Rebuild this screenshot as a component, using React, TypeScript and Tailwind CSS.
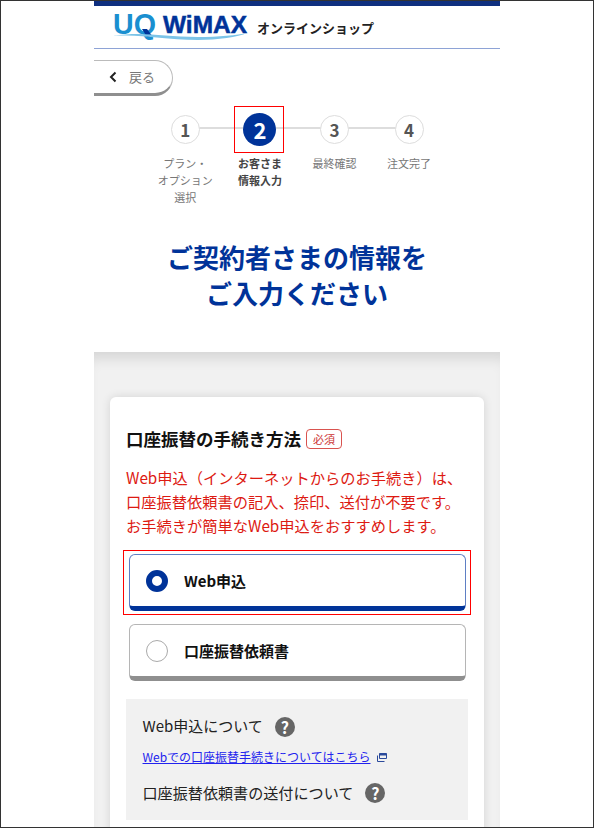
const FONT = "font-['Noto_Sans_CJK_JP','Noto_Sans',sans-serif]";

function Logo() {
  return (
    <svg width="136" height="36" viewBox="0 -4 136 36" className="shrink-0">
      <text x="0" y="22" fontFamily="'Liberation Sans',sans-serif" fontWeight="700" fontSize="30" fill="#1a8fd0" textLength="43" lengthAdjust="spacingAndGlyphs">UQ</text>
      <path d="M29 17h5l6 8h-6z" fill="#003399" />
      <text x="50" y="21" fontFamily="'Liberation Sans',sans-serif" fontWeight="700" fontSize="24" fill="#003399" stroke="#003399" strokeWidth="0.5" textLength="84" lengthAdjust="spacingAndGlyphs">WiMAX</text>
      <path d="M0 24C30 19 50 25 85 25 105 25 125 23 134 21 125 25 105 28 85 28 50 28 30 22 0 24z" fill="#7cc4e8" />
    </svg>
  );
}

function Step({ n, label, active }: { n: number; label: string[]; active?: boolean }) {
  return (
    <div className="relative flex w-[74.6px] flex-col items-center">
      <div
        className={
          active
            ? "flex h-[33px] w-[33px] items-center justify-center rounded-full bg-[#003399] text-[22px] font-bold text-white"
            : "flex h-[29px] w-[29px] items-center justify-center rounded-full border border-[#ddd] bg-white text-[17px] font-bold text-[#555]"
        }
      >
        {n}
      </div>
      <div
        className={
          "absolute whitespace-nowrap text-center text-[11px] leading-[17px] " +
          (active ? "top-[42px] font-bold text-[#444]" : "top-[40px] text-[#777]")
        }
      >
        {label.map((l) => (
          <div key={l}>{l}</div>
        ))}
      </div>
    </div>
  );
}

function Radio({ label, on }: { label: string; on?: boolean }) {
  return (
    <div
      className={
        "flex h-[57px] items-center rounded-md border border-b-[5px] bg-white pl-[16px] " +
        (on ? "border-[#5f7fc4] border-b-[#003399]" : "border-[#b5b5b5] border-b-[#8f8f8f]")
      }
    >
      {on ? (
        <div className="h-[22px] w-[22px] rounded-full border-[6px] border-[#003399] bg-white" />
      ) : (
        <div className="h-[22px] w-[22px] rounded-full border border-[#aaa] bg-white" />
      )}
      <span className="ml-4 text-[15px] font-bold text-[#111]">{label}</span>
    </div>
  );
}

function Help() {
  return (
    <span className="flex h-5 w-5 items-center justify-center rounded-full bg-[#666] text-[16px] font-bold leading-none text-white">
      ?
    </span>
  );
}

export default function App() {
  return (
    <div className={"h-[828px] overflow-hidden border border-[#333] bg-white " + FONT}>
      <div className="ml-[93px] w-[406px]">
        <header className="h-12 border-b border-[#8ea3d6] border-t-[5px] border-t-[#0f2f7f] pl-[19px] pt-[2px]">
          <div className="flex items-start">
            <Logo />
            <span className="ml-2 mt-[10px] text-[13px] font-bold text-[#222]">オンラインショップ</span>
          </div>
        </header>

        <div className="pt-[11px]">
          <div className="flex h-9 w-[79px] items-center rounded-r-[18px] border border-l-0 border-[#bbb] border-b-[3px] border-b-[#8f8f8f] bg-white pl-[15px] text-[13px] text-[#777]">
            <svg width="8" height="12" viewBox="0 0 8 12" className="mr-[12px]">
              <path d="M6.5 1.5 2 6l4.5 4.5" fill="none" stroke="#222" strokeWidth="2" />
            </svg>
            戻る
          </div>
        </div>

        <div className="relative ml-[54px] mt-[17px] h-[118px]">
          <div className="absolute left-[36px] right-[100px] top-[14px] h-0.5 bg-[#ddd]" />
          <div className="relative flex h-[33px] items-center">
            <Step n={1} label={["プラン・", "オプション", "選択"]} />
            <Step n={2} label={["お客さま", "情報入力"]} active />
            <Step n={3} label={["最終確認"]} />
            <Step n={4} label={["注文完了"]} />
          </div>
          <div className="pointer-events-none absolute left-[86px] top-[-7px] h-[47px] w-[50px] border border-[#f00]" />
        </div>

        <h1 className="mt-[8px] text-center text-[26px] font-bold leading-[36px] text-[#003399]">
          ご契約者さまの情報を
          <br />
          ご入力ください
        </h1>

        <div className="mt-[41px] bg-[#f1f1f1] px-4 pt-[45px] shadow-[inset_0_14px_14px_-8px_rgba(0,0,0,0.12)]">
          <div className="h-[500px] rounded-md bg-white px-4 pt-[29px] shadow-[0_0_10px_rgba(0,0,0,0.12)]">
            <div className="flex items-center">
              <h2 className="text-[17.5px] font-bold text-[#111]">口座振替の手続き方法</h2>
              <span className="ml-[5px] rounded-sm border border-[#d9534f] px-[6px] text-[11px] leading-[18px] text-[#cc3333]">必須</span>
            </div>
            <p className="mt-[13px] text-[15.25px] leading-[24px] text-[#dd1a12]">
              Web申込（インターネットからのお手続き）は、
              <br />
              口座振替依頼書の記入、捺印、送付が不要です。
              <br />
              お手続きが簡単なWeb申込をおすすめします。
            </p>

            <div className="relative mt-[17px] flex flex-col gap-[13px] pl-[3px] pr-[2px]">
              <div className="pointer-events-none absolute left-[-3px] right-[-3px] top-[-4px] h-[65px] border border-[#f00]" />
              <Radio label="Web申込" on />
              <Radio label="口座振替依頼書" />
            </div>

            <div className="mt-[18px] bg-[#f1f1f1] pb-4 pl-[16.5px] pr-4 pt-4">
              <div className="flex items-center gap-[12px] text-[15px] text-[#222]">
                Web申込について
                <Help />
              </div>
              <div className="mt-[10.5px] flex items-center gap-[6px]">
                <a className="text-[12px] text-[#2222ee] underline">Webでの口座振替手続きについてはこちら</a>
                <svg width="10" height="9" viewBox="0 0 10 9">
                  <path d="M2.5.5h7v5h-7z M.5 2.5v6h7" fill="none" stroke="#2b4a9b" strokeWidth="1" />
                  <path d="M2.5.5h7v2h-7z" fill="#2b4a9b" />
                </svg>
              </div>
              <div className="mt-[15px] flex items-center gap-[12px] text-[15.1px] text-[#222]">
                口座振替依頼書の送付について
                <Help />
              </div>
            </div>
          </div>
        </div>
      </div>
    </div>
  );
}
